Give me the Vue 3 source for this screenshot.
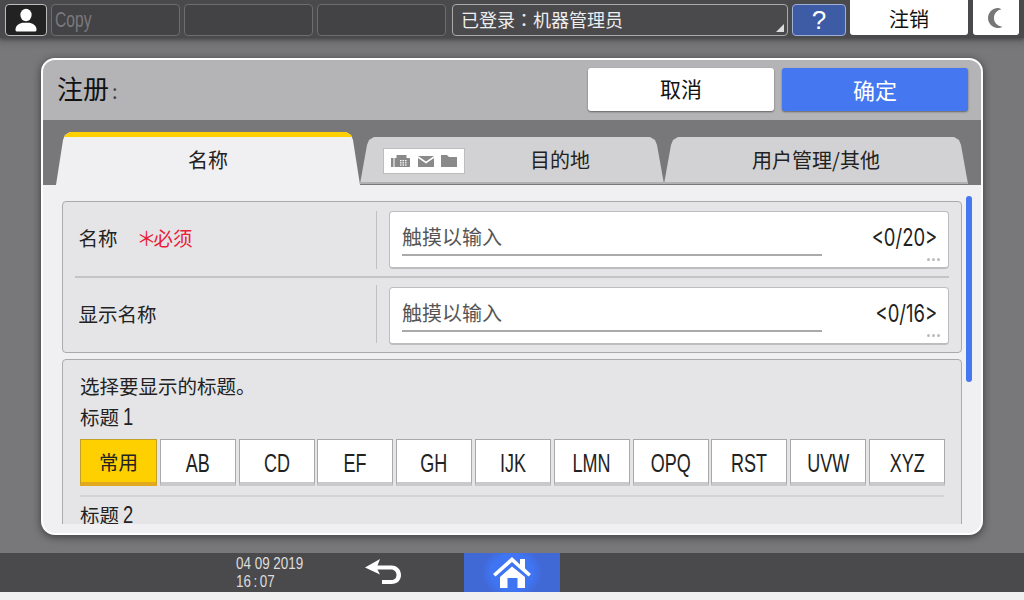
<script setup>
const indices = ['AB', 'CD', 'EF', 'GH', 'IJK', 'LMN', 'OPQ', 'RST', 'UVW', 'XYZ']

const campos = [
  { nombre: '名称', requerido: true, contador: '<0/20>' },
  { nombre: '显示名称', requerido: false, contador: '<0/16>' }
]
</script>

<template>
  <div class="pantalla">
    <header class="barra">
      <div class="usuario">
        <svg width="26" height="26" viewBox="0 0 26 26">
          <ellipse cx="13" cy="8" rx="5.6" ry="6.2" fill="#fff" />
          <path d="M2.5 23c0-4 2.5-6.2 7-7.2h7c4.500 1 7 3.200 7 7.200 0 1-.8 1.500-2 1.500h-17c-1.200 0-2-.5-2-1.500z" fill="#fff" />
        </svg>
      </div>
      <div class="ranura copy"><span class="estrecho">Copy</span></div>
      <div class="ranura"></div>
      <div class="ranura"></div>
      <div class="sesion">
        已登录<span class="colon">：</span>机器管理员
        <span class="esquina"></span>
      </div>
      <div class="ayuda">?</div>
      <div class="salir">注销</div>
      <div class="luna">
        <svg width="20" height="22" viewBox="0 0 20 22">
          <path d="M11 1C5.500 2 2 6 2 11s3.500 9 9 10c2 .2 4-.3 5.500-1.300C11 19 8 15.500 8 11s3-8 7.500-8.700C14 1.300 12.500 .9 11 1z" fill="#77777a" />
        </svg>
      </div>
    </header>

    <main class="fondo">
      <section class="panel">
        <div class="cabecera">
          <h1>注册<span class="dospuntos">:</span></h1>
          <button class="boton cancelar">取消</button>
          <button class="boton confirmar">确定</button>
        </div>

        <nav class="pestanas">
          <div class="pestana activa">名称</div>
          <div class="pestana destino">
            <span class="iconos">
              <svg width="20" height="12" viewBox="0 0 20 12">
                <rect x="0" y="3" width="2.500" height="9" fill="#8a8a8a" />
                <path d="M3.500 3h2V0h10v3h2.500a1 1 0 0 1 1 1v8H3.500z" fill="#8a8a8a" />
                <g fill="#fff">
                  <rect x="9" y="5" width="1.500" height="1.200" /><rect x="11.500" y="5" width="1.500" height="1.200" /><rect x="14" y="5" width="1.500" height="1.200" />
                  <rect x="9" y="7.200" width="1.500" height="1.200" /><rect x="11.500" y="7.200" width="1.500" height="1.200" /><rect x="14" y="7.200" width="1.500" height="1.200" />
                  <rect x="9" y="9.400" width="1.500" height="1.200" /><rect x="11.500" y="9.400" width="1.500" height="1.200" /><rect x="14" y="9.400" width="1.500" height="1.200" />
                </g>
              </svg>
              <svg width="16" height="11" viewBox="0 0 16 11">
                <path d="M0 0h16L8 5.500z" fill="#8a8a8a" />
                <path d="M0 2l8 5.500L16 2v9H0z" fill="#8a8a8a" />
              </svg>
              <svg width="16" height="12" viewBox="0 0 16 12">
                <path d="M0 0h6l2 2h8v10H0z" fill="#8a8a8a" />
              </svg>
            </span>
            目的地
          </div>
          <div class="pestana">用户管理/其他</div>
        </nav>

        <div class="contenido">
          <div class="scroll"></div>

          <div class="lista">
            <div class="grupo">
              <div v-for="(campo, i) in campos" :key="campo.nombre" class="fila" :class="{ ultima: i === campos.length - 1 }">
                <div class="etiqueta">
                  <span>{{ campo.nombre }}</span>
                  <span v-if="campo.requerido" class="requerido"><span class="aster">＊</span>必须</span>
                </div>
                <div class="entrada">
                  <div class="entrada-texto">触摸以输入</div>
                  <div class="contador">{{ campo.contador }}</div>
                  <div class="puntos"><i></i><i></i><i></i></div>
                </div>
              </div>
            </div>

            <div class="grupo titulos">
              <p class="aviso">选择要显示的标题。</p>
              <p class="subtitulo">标题 <span class="num">1</span></p>
              <div class="indices">
                <div class="indice marcado">常用</div>
                <div v-for="letra in indices" :key="letra" class="indice"><span class="letra">{{ letra }}</span></div>
              </div>
              <div class="separador"></div>
              <p class="subtitulo">标题 <span class="num">2</span></p>
            </div>
          </div>
        </div>
      </section>
    </main>

    <footer class="pie">
      <div class="fecha">
        <div class="estrecho">04 09 2019</div>
        <div class="estrecho hora">16 : 07</div>
      </div>
      <div class="volver">
        <svg width="38" height="30" viewBox="0 0 38 30">
          <path d="M16 1L1 9.500 16 16.500 13.500 11.500H27c3.500 0 5.500 2.500 5.500 5.500s-2 5-5.500 5H18v4h9.500c6 0 9.500-4 9.500-9s-3.500-9.500-9.500-9.500H13.500z" fill="#fff" />
        </svg>
      </div>
      <div class="inicio">
        <svg class="casa" width="38" height="32" viewBox="0 0 38 32">
          <path d="M19 0L0 17l2.500 2.500L19 5l16.500 14.500L38 17l-6-5.500V2h-5v5.500z" fill="#fff" />
          <path d="M7 20L19 9.500 32 20v11H7zm7.500 1V31h10V21z" fill="#fff" fill-rule="evenodd" />
        </svg>
      </div>
    </footer>
    <div class="franja"></div>
  </div>
</template>

<style>
body {
  margin: 0;
  background: #f0f0f0;
}
</style>

<style scoped>
.pantalla {
  width: 1024px;
  height: 600px;
  display: flex;
  flex-direction: column;
  overflow: hidden;
  font-family: "Noto Sans CJK SC", "Liberation Sans", sans-serif;
  color: #222;
}

.estrecho {
  display: inline-block;
  transform-origin: left center;
}

.barra {
  height: 38px;
  flex: none;
  display: flex;
  background: #4a494c;
  box-shadow: 0 2px 4px rgba(0, 0, 0, 0.35);
  padding: 4px 5px 0;
  box-sizing: border-box;
  position: relative;
  z-index: 2;
}

.usuario {
  width: 42px;
  height: 32px;
  box-sizing: border-box;
  margin-right: 4px;
  background: #222;
  border: 1px solid #bbb;
  border-radius: 4px;
  display: flex;
  align-items: center;
  justify-content: center;
}

.ranura {
  width: 129px;
  height: 32px;
  box-sizing: border-box;
  margin-right: 4px;
  border: 1px solid #6d6c6f;
  border-radius: 4px;
  background: #434245;
}

.copy {
  color: #7a797c;
  font-family: "Liberation Sans", sans-serif;
  font-size: 22px;
  line-height: 29px;
  padding-left: 3px;
}

.copy .estrecho {
  transform: scaleX(0.71);
}

.sesion {
  width: 336px;
  height: 32px;
  box-sizing: border-box;
  margin: 0 4px 0 2px;
  border: 1px solid #aaa;
  border-radius: 4px;
  color: #eee;
  font-size: 18px;
  line-height: 28px;
  padding-left: 8px;
  position: relative;
}

.colon {
  font-family: "Noto Sans CJK TC", sans-serif;
}

.esquina {
  position: absolute;
  right: 3px;
  bottom: 3px;
  width: 8px;
  height: 8px;
  background: #ddd;
  clip-path: polygon(100% 0, 100% 100%, 0 100%);
}

.ayuda {
  width: 54px;
  height: 32px;
  box-sizing: border-box;
  margin-right: 4px;
  background: #3e5ca5;
  border: 1px solid #9fb0d6;
  border-radius: 4px;
  color: #fff;
  text-align: center;
  font-family: "Liberation Sans", sans-serif;
  font-size: 26px;
  line-height: 30px;
}

.salir {
  width: 118px;
  height: 35px;
  margin-top: -4px;
  margin-right: 5px;
  background: #fff;
  border-radius: 0 0 3px 3px;
  text-align: center;
  font-size: 20px;
  line-height: 37px;
  color: #111;
}

.luna {
  width: 46px;
  height: 35px;
  margin-top: -4px;
  background: #fff;
  border-radius: 0 0 3px 3px;
  display: flex;
  align-items: center;
  justify-content: center;
}

.fondo {
  flex: none;
  height: 515px;
  box-sizing: border-box;
  padding: 20px 41px 18px;
  background: linear-gradient(#6e6d70, #78777a 12px);
}

.panel {
  height: 477px;
  box-sizing: border-box;
  border: 2px solid #fff;
  border-radius: 14px;
  overflow: hidden;
  background: #f0eff2;
  display: flex;
  flex-direction: column;
  box-shadow: 0 2px 8px rgba(0, 0, 0, 0.5);
}

.cabecera {
  height: 60px;
  flex: none;
  background: #b4b4b6;
  display: flex;
  align-items: flex-start;
  padding: 8px 13px 0 14px;
  box-sizing: border-box;
}

.cabecera h1 {
  flex: 1;
  margin: 0;
  font-weight: 400;
  font-size: 26px;
  line-height: 40px;
  color: #111;
}

.dospuntos {
  font-size: 20px;
  margin-left: 3px;
  color: #444;
}

.boton {
  height: 43px;
  border: none;
  border-radius: 3px;
  font-family: inherit;
  box-shadow: 0 1px 2px rgba(0, 0, 0, 0.45);
  padding: 0 0 3px;
}

.cancelar {
  width: 186px;
  margin-right: 8px;
  background: #fff;
  color: #111;
  font-size: 21px;
}

.confirmar {
  width: 186px;
  background: #4477f0;
  color: #fff;
  font-size: 22px;
  padding-bottom: 1px;
}

.pestanas {
  height: 65px;
  flex: none;
  background: #78777a;
  display: flex;
  align-items: flex-end;
  padding-left: 13px;
}

.pestana {
  width: 304px;
  height: 47px;
  margin-bottom: 1px;
  background: #d2d2d4;
  border-bottom: 2px solid #b0b0b2;
  box-sizing: border-box;
  clip-path: polygon(0 100%, 7px 8px, 9px 3px, 14px 0, calc(100% - 14px) 0, calc(100% - 9px) 3px, calc(100% - 7px) 8px, 100% 100%);
  display: flex;
  align-items: center;
  justify-content: center;
  font-size: 20px;
  color: #222;
  position: relative;
}

.activa {
  height: 53px;
  margin-bottom: 0;
  padding-bottom: 3px;
  background: #f0eff2;
  border-top: 5px solid #ffd000;
  border-bottom: none;
}

.destino {
  padding-left: 96px;
}

.iconos {
  position: absolute;
  left: 23px;
  top: 11px;
  width: 82px;
  height: 26px;
  box-sizing: border-box;
  background: #fff;
  border: 1px solid #bdbdbd;
  display: flex;
  align-items: center;
  justify-content: center;
  gap: 7px;
}

.contenido {
  flex: 1;
  min-height: 0;
  padding: 16px 19px 9px;
  position: relative;
  display: flex;
}

.lista {
  flex: 1;
  min-height: 0;
  overflow: hidden;
}

.scroll {
  position: absolute;
  left: 923px;
  top: 11px;
  width: 6px;
  height: 186px;
  border-radius: 3px;
  background: #4477f0;
}

.grupo {
  width: 900px;
  box-sizing: border-box;
  background: #e5e5e7;
  border: 1px solid #aaaaac;
  border-radius: 4px;
  padding: 1px 12px;
}

.fila {
  height: 75px;
  display: flex;
  align-items: center;
  border-bottom: 2px solid #c4c4c6;
  box-sizing: border-box;
}

.fila.ultima {
  height: 73px;
  align-items: flex-start;
  padding-top: 9px;
  border-bottom: none;
}

.etiqueta {
  width: 302px;
  height: 58px;
  flex: none;
  box-sizing: border-box;
  border-right: 1px solid #c0c0c2;
  padding: 0 0 4px 3.500px;
  display: flex;
  align-items: center;
  font-size: 19.500px;
  margin-right: 12px;
}

.ultima .etiqueta {
  margin-top: -2px;
  padding-bottom: 2px;
}

.requerido {
  margin-left: 19px;
  color: #e8203a;
}

.aster {
  font-size: 20px;
  line-height: 1;
  margin-right: -3px;
}

.entrada {
  width: 560px;
  height: 58px;
  box-sizing: border-box;
  background: #fff;
  border: 1px solid #bdbdbf;
  border-bottom-width: 2px;
  border-radius: 4px;
  position: relative;
}

.entrada-texto {
  position: absolute;
  left: 12px;
  top: 9px;
  width: 420px;
  height: 35px;
  box-sizing: border-box;
  border-bottom: 2px solid #aaaaac;
  font-size: 20px;
  line-height: 32px;
  color: #555;
}

.contador {
  position: absolute;
  right: 11px;
  top: 13px;
  font-family: "Inter", sans-serif;
  font-size: 24px;
  line-height: 26px;
  color: #222;
  transform: scaleX(0.77);
  transform-origin: right center;
}

.puntos {
  position: absolute;
  right: 8px;
  bottom: 6px;
  display: flex;
  gap: 2px;
}

.puntos i {
  width: 3px;
  height: 3px;
  background: #bbb;
  border-radius: 50%;
}

.titulos {
  margin-top: 6px;
  padding: 13px 17px 0;
  height: 175px;
}

.aviso {
  margin: 0;
  font-size: 19.500px;
  line-height: 26px;
}

.subtitulo {
  margin: 5px 0 0;
  font-size: 19.500px;
  line-height: 26px;
}

.num {
  display: inline-block;
  font-family: "Liberation Sans", sans-serif;
  font-size: 23px;
  transform: scaleX(0.8);
  transform-origin: left center;
}

.indices {
  display: flex;
  gap: 2.800px;
  margin-top: 9px;
}

.indice {
  width: 76px;
  height: 47px;
  flex: none;
  box-sizing: border-box;
  background: #fff;
  border: 1px solid #a9a9ab;
  border-bottom: 4px solid #c9c9cb;
  text-align: center;
  font-family: "Liberation Sans", sans-serif;
  font-size: 25px;
  line-height: 46px;
  color: #222;
}

.letra {
  display: inline-block;
  transform: scaleX(0.72);
}

.marcado {
  width: 77px;
  background: #ffd000;
  border-color: #bfa12a;
  border-bottom-color: #e2a81e;
  font-family: "Noto Sans CJK SC", sans-serif;
  font-size: 19.500px;
  line-height: 44px;
}

.separador {
  height: 2px;
  background: #d3d3d5;
  margin-top: 9px;
}

.titulos .separador + .subtitulo {
  margin-top: 5px;
}

.pie {
  height: 39px;
  flex: none;
  background: #4a494c;
  display: flex;
  color: #ddd;
}

.fecha {
  width: 128px;
  margin-left: 236px;
  font-family: "Liberation Sans", sans-serif;
  font-size: 17px;
  line-height: 18px;
  padding-top: 2px;
  box-sizing: border-box;
}

.fecha .estrecho {
  display: block;
  transform: scaleX(0.79);
}

.fecha .hora {
  word-spacing: -1.500px;
}

.volver {
  width: 100px;
  display: flex;
  align-items: center;
  box-sizing: border-box;
}

.inicio {
  width: 96px;
  background: radial-gradient(ellipse 30px 26px at center, #3f74f2 70%, #4169d6 100%);
  display: flex;
  align-items: center;
  justify-content: center;
}

.franja {
  flex: 1;
  background: #f0f0f0;
}
</style>
